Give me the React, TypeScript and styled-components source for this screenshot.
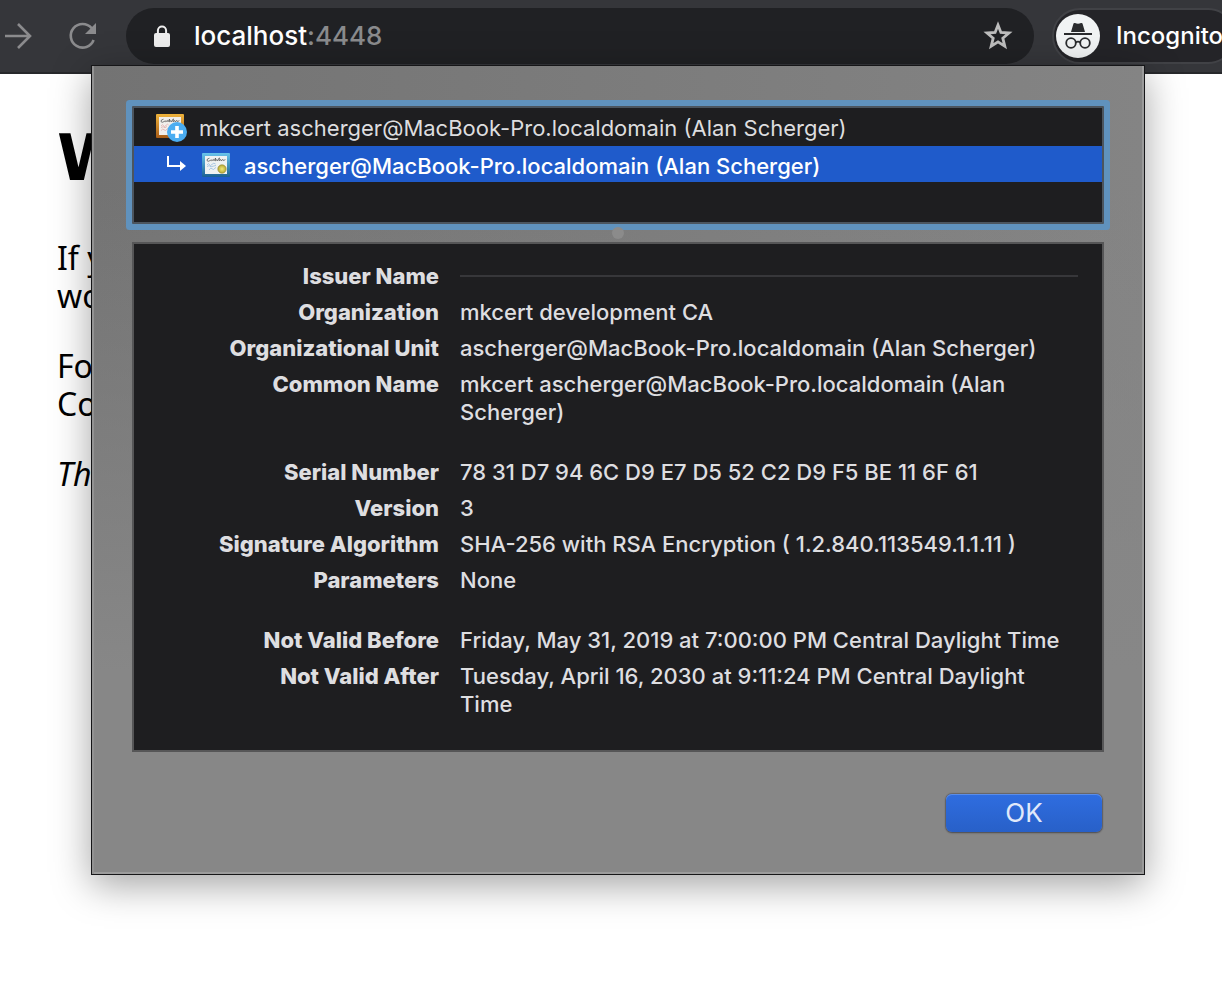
import React from "react";
import styled, { createGlobalStyle, css } from "styled-components";

const GlobalStyle = createGlobalStyle`
  *, *::before, *::after { box-sizing: border-box; }
  body {
    margin: 0;
    background: #fff;
    overflow: hidden;
    font-family: Inter, "Liberation Sans", sans-serif;
  }
`;

const Window = styled.div`
  position: relative;
  min-height: 100vh;
  overflow: hidden;
`;

const Toolbar = styled.header`
  position: relative;
  display: flex;
  align-items: center;
  height: 74px;
  background: #35363a;
  border-bottom: 2px solid #27282b;
  overflow: hidden;
`;

const NavButton = styled.button`
  display: flex;
  flex: none;
  width: 32px;
  height: 32px;
  margin: 0 30px 0 2px;
  padding: 0;
  border: 0;
  background: none;
  color: #8b8b8d;
`;

const AddressBar = styled.div`
  display: flex;
  flex: 1;
  align-items: center;
  min-width: 0;
  height: 56px;
  margin-left: -2px;
  padding: 0 20px 0 26px;
  border-radius: 28px;
  background: #202124;
  color: #fff;
`;

const Address = styled.div`
  flex: 1;
  margin-left: 22px;
  font-size: 26px;
  font-weight: 500;
  line-height: 36px;
  white-space: nowrap;
`;

const Port = styled.span`
  color: #8a8b8d;
`;

const StarButton = styled.button`
  display: flex;
  padding: 0;
  border: 0;
  background: none;
  color: #bdbdbd;
`;

const Profile = styled.button`
  display: flex;
  flex: none;
  align-items: center;
  gap: 16px;
  width: 184px;
  height: 56px;
  margin: 0 -14px 0 18px;
  padding: 0 2px;
  border: 2px solid #414246;
  border-radius: 28px;
  background: #242428;
  color: #fff;
  font: 500 24px/36px Inter, "Liberation Sans", sans-serif;
  svg { flex: none; }
`;

const Page = styled.main`
  padding: 40px 57px;
  color: #000;
  font: 32px/38px "Noto Sans", "DejaVu Sans", sans-serif;
`;

const PageTitle = styled.h1`
  margin: 0 0 37px;
  font-family: "DejaVu Sans", sans-serif;
  font-size: 64px;
  font-weight: 700;
  line-height: 88px;
`;

const Paragraph = styled.p`
  margin: 0 0 32px;
`;

const Dialog = styled.section`
  position: absolute;
  top: 65px;
  left: 91px;
  right: 77px;
  padding: 40px 38px 42px;
  border: 1px solid #161618;
  background: linear-gradient(to bottom, rgba(135, 135, 135, 0) 15%, #878787 75%),
    linear-gradient(to right, #737373, #848484);
  box-shadow: inset 2px 0 #929292, inset -2px 0 #9a9a9a, inset 0 -2px #9c9c9c,
    0 10px 36px rgba(0, 0, 0, 0.36);
`;

const ChainList = styled.ul`
  height: 118px;
  margin: 0 2px;
  padding: 0;
  border: 2px solid #4c555e;
  border-radius: 1px;
  background: #1e1e20;
  box-shadow: 0 0 0 6px #6092bd;
  list-style: none;
`;

const ChainItem = styled.li<{ $selected?: boolean }>`
  display: flex;
  align-items: center;
  height: 38px;
  padding: 2px 0 0 22px;
  color: #dddddf;
  font-size: 22px;
  line-height: 28px;
  white-space: nowrap;
  svg { flex: none; }
  ${(p) =>
    p.$selected &&
    css`
      height: 36px;
      padding: 4px 0 0 32px;
      background: #1f5bcb;
      color: #fff;
      font-weight: 500;
    `}
`;

const ChainLabel = styled.span<{ $nested?: boolean }>`
  margin-left: ${(p) => (p.$nested ? 14 : 11)}px;
`;

const Splitter = styled.div`
  display: flex;
  align-items: center;
  justify-content: center;
  height: 18px;
  &::after {
    content: "";
    width: 12px;
    height: 12px;
    border-radius: 50%;
    background: #8b8b8b;
  }
`;

const Details = styled.dl`
  display: grid;
  grid-template-columns: 305px 1fr;
  gap: 8px 21px;
  margin: 0 2px;
  padding: 18px 24px 32px 0;
  border: 2px solid #565657;
  background: #1e1e20;
  color: #dedee0;
  font-size: 22px;
  font-weight: 500;
  line-height: 28px;
`;

const Term = styled.dt<{ $group?: boolean }>`
  margin-top: ${(p) => (p.$group ? 24 : 0)}px;
  font-weight: 800;
  text-align: right;
`;

const Value = styled.dd<{ $group?: boolean }>`
  margin: ${(p) => (p.$group ? 24 : 0)}px 0 0;
  padding-right: 8px;
`;

const RuleCell = styled.dd`
  margin: 0;
`;

const Rule = styled.hr`
  width: 100%;
  margin: 13px 0 0;
  border: 0;
  border-top: 2px solid #37373a;
`;

const Actions = styled.footer`
  display: flex;
  justify-content: flex-end;
  padding: 42px 4px 0;
`;

const OkButton = styled.button`
  width: 156px;
  height: 38px;
  padding: 0;
  border: 0;
  border-radius: 6px;
  background: linear-gradient(#2f6de0, #2860c8);
  box-shadow: inset 0 1px #5b8de8, 0 0 1px 1px rgba(60, 60, 70, 0.45),
    0 1px 2px rgba(0, 0, 0, 0.3);
  color: #e0e9fa;
  font: 26px/38px Inter, "Liberation Sans", sans-serif;
`;

const ForwardIcon = () => (
  <svg width="32" height="32" viewBox="0 0 32 32" fill="none" stroke="currentColor" strokeWidth="2.6" aria-hidden="true">
    <path d="M3 16H28M16 4L28 16L16 28" />
  </svg>
);

const ReloadIcon = () => (
  <svg width="32" height="32" viewBox="0 0 32 32" aria-hidden="true">
    <path d="M25.6 8.2A11.8 11.8 0 1 0 27.6 20" fill="none" stroke="currentColor" strokeWidth="2.6" />
    <path d="M30 3V14H19Z" fill="currentColor" />
  </svg>
);

const LockIcon = () => (
  <svg width="20" height="24" viewBox="0 0 20 24" aria-hidden="true">
    <rect x="2" y="9" width="16" height="14" rx="2" fill="#eee" />
    <path d="M5.9 10V6.5a4.1 4.1 0 0 1 8.2 0V10" fill="none" stroke="#eee" strokeWidth="2" />
  </svg>
);

const StarIcon = () => (
  <svg width="32" height="32" viewBox="0 0 32 32" fill="none" stroke="currentColor" strokeWidth="2.8" aria-hidden="true">
    <path d="M16 5L18.9 12.4L27 13L20.8 18.2L22.8 26.2L16 21.9L9.2 26.2L11.2 18.2L5 13L13.1 12.4Z" />
  </svg>
);

const IncognitoIcon = () => (
  <svg width="44" height="44" viewBox="0 0 44 44" aria-hidden="true">
    <circle cx="22" cy="22" r="22" fill="#f1f3f4" />
    <path d="M15 18L17.5 9.5Q18 8.6 19 9Q22 10.3 25 9Q26 8.6 26.5 9.5L29 18Z" fill="#2a2b2e" />
    <path d="M8 20H36" stroke="#2a2b2e" strokeWidth="2" />
    <g fill="none" stroke="#2a2b2e" strokeWidth="1.8">
      <circle cx="15" cy="29" r="4.8" />
      <circle cx="29" cy="29" r="4.8" />
      <path d="M19.8 28.5Q22 26.8 24.2 28.5" />
    </g>
  </svg>
);

const RootCertificateIcon = () => (
  <svg width="32" height="30" viewBox="0 0 32 30" aria-hidden="true">
    <defs>
      <linearGradient id="gold" x1="0" y1="0" x2="0" y2="1">
        <stop offset="0" stopColor="#efb33b" />
        <stop offset="1" stopColor="#a85c17" />
      </linearGradient>
    </defs>
    <rect x="0" y="1" width="28" height="24" rx="1" fill="url(#gold)" />
    <rect x="3" y="4" width="22" height="18" fill="#f1efec" />
    <path d="M7.5 6.2Q4.6 6.6 5 8.6Q6 10 8 8.6L9.4 7.8L9.8 8.8L11.4 7.4L12 8.8L13.6 6L13.4 8.8L15 7.6L15.4 8.8L17.4 5.8L17 8.8L18.6 7.4L19 8.8L21 7.4L21.4 8.6L23.4 7.6" fill="none" stroke="#4a4a4a" strokeWidth="0.7" />
    <path d="M5 13Q7 10.6 7.6 12.6T10 12.4T12.6 12M5 14.6L7 13.6L9 14.8L11 13.4M5 17.6Q7 14.8 8 16.8T12 15.4" fill="none" stroke="#e0a4a4" strokeWidth="0.7" />
    <circle cx="21" cy="19" r="10" fill="#4badf1" />
    <path d="M21 13V25M15 19H27" stroke="#fff" strokeWidth="3.6" />
  </svg>
);

const LeafCertificateIcon = () => (
  <svg width="28" height="26" viewBox="0 0 28 26" aria-hidden="true">
    <defs>
      <linearGradient id="blue" x1="0" y1="0" x2="0" y2="1">
        <stop offset="0" stopColor="#68c3ea" />
        <stop offset="1" stopColor="#1b6194" />
      </linearGradient>
      <radialGradient id="seal">
        <stop offset="0" stopColor="#efe978" />
        <stop offset="1" stopColor="#b7a833" />
      </radialGradient>
    </defs>
    <rect x="0" y="0" width="28" height="24" rx="1" fill="url(#blue)" />
    <rect x="3" y="3" width="22" height="18" fill="#eff2f2" />
    <path d="M7.5 5.2Q4.6 5.6 5 7.6Q6 9 8 7.6L9.4 6.8L9.8 7.8L11.4 6.4L12 7.8L13.6 5L13.4 7.8L15 6.6L15.4 7.8L17.4 4.8L17 7.8L18.6 6.4L19 7.8L21 6.4L21.4 7.6L23.4 6.6" fill="none" stroke="#4a4a4a" strokeWidth="0.7" />
    <path d="M5 12Q7 9.6 7.6 11.6T10 11.4T13.6 11M5 13.6L7 12.6L9 13.8L14 12.4M7 17Q9 13.8 10 15.8T14 14.4" fill="none" stroke="#8bb4dc" strokeWidth="0.7" />
    <circle cx="20" cy="16" r="4.2" fill="url(#seal)" stroke="#8e8736" strokeWidth="0.6" />
  </svg>
);

const ChildArrowIcon = () => (
  <svg width="36" height="20" viewBox="0 0 36 20" aria-hidden="true">
    <path d="M2 0V10H15" fill="none" stroke="#fff" strokeWidth="2" />
    <path d="M14 5L20 10L14 15Z" fill="#fff" />
  </svg>
);

type Row = { term: string; value: string; group?: boolean };

const rows: Row[] = [
  { term: "Organization", value: "mkcert development CA" },
  { term: "Organizational Unit", value: "ascherger@MacBook-Pro.localdomain (Alan Scherger)" },
  { term: "Common Name", value: "mkcert ascherger@MacBook-Pro.localdomain (Alan Scherger)" },
  { term: "Serial Number", value: "78 31 D7 94 6C D9 E7 D5 52 C2 D9 F5 BE 11 6F 61", group: true },
  { term: "Version", value: "3" },
  { term: "Signature Algorithm", value: "SHA-256 with RSA Encryption ( 1.2.840.113549.1.1.11 )" },
  { term: "Parameters", value: "None" },
  { term: "Not Valid Before", value: "Friday, May 31, 2019 at 7:00:00 PM Central Daylight Time", group: true },
  { term: "Not Valid After", value: "Tuesday, April 16, 2030 at 9:11:24 PM Central Daylight Time" },
];

export default function App() {
  return (
    <Window>
      <GlobalStyle />
      <Toolbar>
        <NavButton aria-label="Forward"><ForwardIcon /></NavButton>
        <NavButton aria-label="Reload"><ReloadIcon /></NavButton>
        <AddressBar>
          <LockIcon />
          <Address>localhost<Port>:4448</Port></Address>
          <StarButton aria-label="Bookmark"><StarIcon /></StarButton>
        </AddressBar>
        <Profile><IncognitoIcon />Incognito</Profile>
      </Toolbar>
      <Page>
        <PageTitle>W</PageTitle>
        <Paragraph>If y<br />wo</Paragraph>
        <Paragraph>Fo<br />Co</Paragraph>
        <Paragraph><em>Th</em></Paragraph>
      </Page>
      <Dialog role="dialog" aria-label="Certificate">
        <ChainList>
          <ChainItem>
            <RootCertificateIcon />
            <ChainLabel>mkcert ascherger@MacBook-Pro.localdomain (Alan Scherger)</ChainLabel>
          </ChainItem>
          <ChainItem $selected>
            <ChildArrowIcon />
            <LeafCertificateIcon />
            <ChainLabel $nested>ascherger@MacBook-Pro.localdomain (Alan Scherger)</ChainLabel>
          </ChainItem>
        </ChainList>
        <Splitter />
        <Details>
          <Term>Issuer Name</Term>
          <RuleCell><Rule /></RuleCell>
          {rows.map((row) => (
            <React.Fragment key={row.term}>
              <Term $group={row.group}>{row.term}</Term>
              <Value $group={row.group}>{row.value}</Value>
            </React.Fragment>
          ))}
        </Details>
        <Actions><OkButton>OK</OkButton></Actions>
      </Dialog>
    </Window>
  );
}
